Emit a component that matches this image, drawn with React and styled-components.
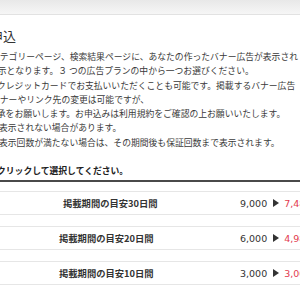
import React from 'react'
import styled, { createGlobalStyle } from 'styled-components'

const GlobalStyle = createGlobalStyle`
  html, body {
    margin: 0;
    padding: 0;
    background: #fff;
    overflow: hidden;
  }
  body {
    font-family: "Noto Sans CJK JP", "Noto Sans", sans-serif;
    color: #333;
  }
`

const lines = [
  { text: 'カテゴリーページ、検索結果ページに、あなたの作ったバナー広告が表示され', indent: -9 },
  { text: '表示となります。３ つの広告プランの中から一つお選びください。', indent: -11 },
  { text: 'クレジットカードでお支払いいただくことも可能です。掲載するバナー広告', indent: -3 },
  { text: 'バナーやリンク先の変更は可能ですが、', indent: -9 },
  { text: '了承をお願いします。お申込みは利用規約をご確認の上お願いいたします。', indent: -12 },
  { text: '表示されない場合があります。', indent: -1 },
  { text: '表示回数が満たない場合は、その期間後も保証回数まで表示されます。', indent: -1 },
]

const plans = [
  { label: '掲載期間の目安30日間', price: '9,000', sale: '7,480', shift: 4 },
  { label: '掲載期間の目安20日間', price: '6,000', sale: '4,980', shift: 0 },
  { label: '掲載期間の目安10日間', price: '3,000', sale: '3,000', shift: 0 },
]

function App() {
  return (
    <Page>
      <GlobalStyle />
      <TopBar />
      <Title>申込</Title>
      <Description>
        {lines.map((l, i) => (
          <Line key={i} $indent={l.indent}>{l.text}</Line>
        ))}
      </Description>
      <Notice>クリックして選択してください。</Notice>
      <Divider />
      <PlanList>
        {plans.map((p) => (
          <PlanRow key={p.label}>
            <PlanLabel $shift={p.shift}>{p.label}</PlanLabel>
            <Price>
              {p.price}
              <Arrow />
              <Sale>{p.sale}</Sale>
            </Price>
          </PlanRow>
        ))}
      </PlanList>
    </Page>
  )
}

export default App

const Page = styled.div`
  width: 300px;
  height: 300px;
  overflow: hidden;
`

const TopBar = styled.div`
  height: 14px;
  background: linear-gradient(#e8e8e8, #f6f6f6);
  border-bottom: 1px solid #e2e2e2;
`

const Title = styled.h2`
  margin: 11px 0 0 -10px;
  font-size: 13px;
  line-height: 20px;
  font-weight: normal;
  color: #333;
  white-space: nowrap;
`

const Description = styled.div`
  margin-top: 4px;
  font-size: 8.8px;
  line-height: 14.3px;
  color: #3a3a3a;
`

const Line = styled.div`
  margin-left: ${(p) => p.$indent}px;
  white-space: nowrap;
`

const Notice = styled.p`
  margin: 14px 0 0 -3px;
  font-size: 8.8px;
  line-height: 14.3px;
  font-weight: bold;
  color: #222;
  white-space: nowrap;
`

const Divider = styled.div`
  margin-top: 2px;
  border-top: 2px solid #4a4a4a;
`

const PlanList = styled.ul`
  list-style: none;
  margin: 9px 0 0;
  padding: 0;
  display: flex;
  flex-direction: column;
  gap: 11px;
`

const PlanRow = styled.li`
  height: 22px;
  border-top: 1px solid #e6e6e6;
  border-bottom: 1px solid #e6e6e6;
  display: grid;
  grid-template-columns: 240px auto;
  align-items: center;
  white-space: nowrap;
`

const PlanLabel = styled.span`
  padding-left: ${(p) => 59 + p.$shift}px;
  font-size: 9.3px;
  font-weight: bold;
  color: #333;
`

const Price = styled.span`
  display: flex;
  align-items: center;
  font-family: "DejaVu Sans", sans-serif;
  font-size: 9.5px;
  color: #333;
`

const Arrow = styled.span`
  width: 0;
  height: 0;
  margin: 0 5px 0 6px;
  border-left: 6px solid #333;
  border-top: 4px solid transparent;
  border-bottom: 4px solid transparent;
`

const Sale = styled.span`
  color: #e23a4e;
`
